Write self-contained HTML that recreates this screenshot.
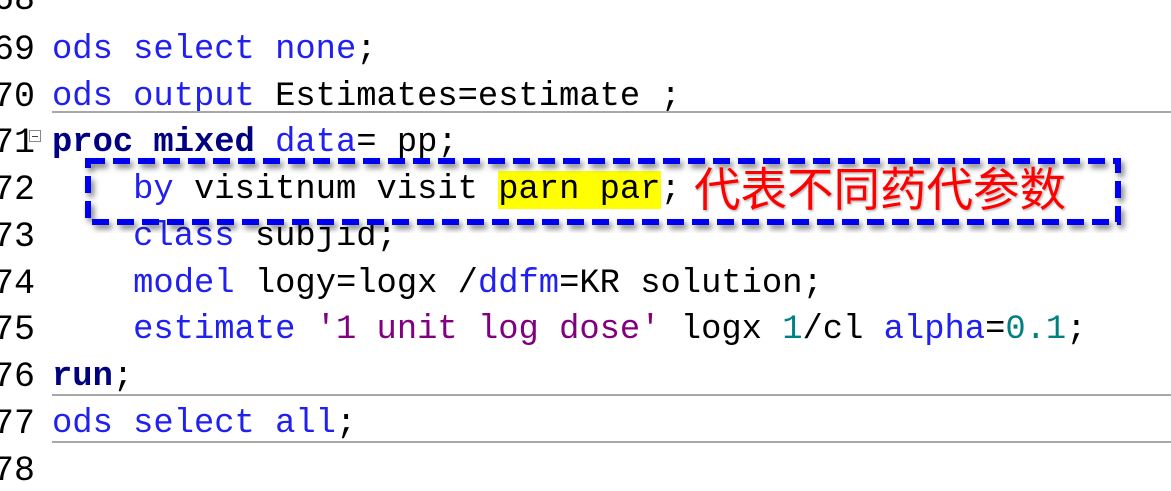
<!DOCTYPE html>
<html><head><meta charset="utf-8"><style>
body{margin:0;width:1171px;height:460px;background:#fff;overflow:hidden;position:relative;font-family:"Liberation Mono","Noto Sans CJK SC",monospace;}
.l{position:absolute;left:52px;font-size:33.8px;line-height:40px;white-space:pre;color:#000;margin-top:2px}
.n{position:absolute;font-size:35px;line-height:40px;white-space:pre;color:#000;right:1136px;text-align:right;font-family:"Liberation Mono",monospace;margin-top:2px}
.k{color:#2020f0}.b{color:#000080;font-weight:bold}.s{color:#800080}.d{color:#008080}
.hr{position:absolute;left:52px;right:0;height:2px;background:#a8a8a8}
.cn{position:absolute;left:694px;top:162px;font-family:"Noto Sans CJK SC",sans-serif;font-size:46.5px;line-height:50px;color:#ff0000;text-shadow:0 0 2px #fff,1px 1px 2px #888;}
.hl{background:#ffff00}
</style></head><body>
<div class="n" style="top:-22px">68</div>
<div class="n" style="top:28px">69</div><div class="l" style="top:28px"><span class="k">ods select none</span>;</div>
<div class="n" style="top:75px">70</div><div class="l" style="top:75px"><span class="k">ods output</span> Estimates=estimate ;</div>
<div class="hr" style="top:111px"></div>
<div class="n" style="top:121px">71</div>
<div style="position:absolute;left:29px;top:130px;width:10px;height:10px;border:1px solid #888;background:#fff"><div style="position:absolute;left:2px;top:5px;width:6px;height:1px;background:#444"></div></div>
<div class="l" style="top:121px"><span class="b">proc mixed</span> <span class="k">data</span>= pp;</div>
<div class="n" style="top:168px">72</div><div class="l" style="top:168px">    <span class="k">by</span> visitnum visit <span class="hl">parn par</span>;</div>
<div class="n" style="top:215px">73</div><div class="l" style="top:215px">    <span class="k">class</span> subjid;</div>
<div class="n" style="top:262px">74</div><div class="l" style="top:262px">    <span class="k">model</span> logy=logx /<span class="k">ddfm</span>=KR solution;</div>
<div class="n" style="top:308px">75</div><div class="l" style="top:308px">    <span class="k">estimate</span> <span class="s">'1 unit log dose'</span> logx <span class="d">1</span>/cl <span class="k">alpha</span>=<span class="d">0.1</span>;</div>
<div class="n" style="top:355px">76</div><div class="l" style="top:355px"><span class="b">run</span>;</div>
<div class="hr" style="top:394px"></div>
<div class="n" style="top:402px">77</div><div class="l" style="top:402px"><span class="k">ods select all</span>;</div>
<div class="hr" style="top:441px"></div>
<div class="n" style="top:449px">78</div>
<svg style="position:absolute;left:80px;top:153px" width="1050" height="80">
<defs><filter id="f" x="-5%" y="-20%" width="110%" height="150%"><feDropShadow dx="3" dy="4" stdDeviation="3" flood-color="#000" flood-opacity="0.5"/></filter></defs>
<rect x="8" y="8" width="1030" height="61" fill="none" stroke="#0000f0" stroke-width="6" stroke-dasharray="17 8" filter="url(#f)"/>
</svg>
<div class="cn">代表不同药代参数</div>
</body></html>
